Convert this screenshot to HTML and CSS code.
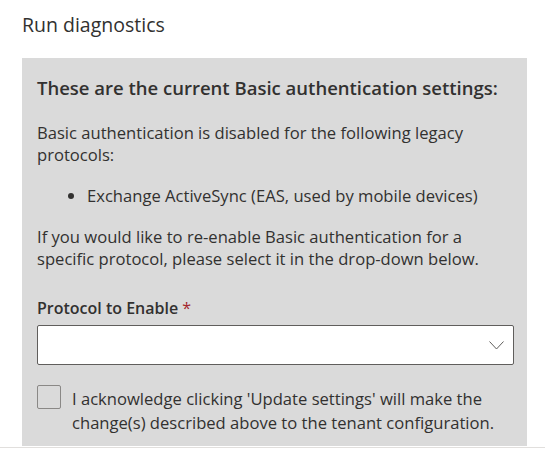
FILE: index.html
```html
<!DOCTYPE html>
<html>
<head>
<meta charset="utf-8">
<link rel="stylesheet" href="styles.css">
</head>
<body>
<div class="page">
  <h1 class="title">Run diagnostics</h1>
  <div class="panel">
    <h2 class="heading">These are the current Basic authentication settings:</h2>
    <p class="text">Basic authentication is disabled for the following legacy protocols:</p>
    <ul class="list">
      <li>Exchange ActiveSync (EAS, used by mobile devices)</li>
    </ul>
    <p class="text text-2">If you would like to re-enable Basic authentication for a specific protocol, please select it in the drop-down below.</p>
    <label class="label">Protocol to Enable <span class="req">*</span></label>
    <div class="select">
      <svg class="chev" width="15" height="9" viewBox="0 0 15 9"><path d="M0.5 0.5 L7.5 8 L14.5 0.5" fill="none" stroke="#605e5c" stroke-width="1"/></svg>
    </div>
    <div class="check-row">
      <span class="box"></span>
      <span class="check-text">I acknowledge clicking 'Update settings' will make the change(s) described above to the tenant configuration.</span>
    </div>
  </div>
  <div class="rule"></div>
</div>
</body>
</html>
```
FILE: styles.css
```css
html, body {
  margin: 0;
  padding: 0;
  background: #ffffff;
}
body {
  font-family: "Open Sans", "Noto Sans", sans-serif;
  color: #323130;
  overflow: hidden;
}
.page {
  width: 545px;
  height: 454px;
  overflow: hidden;
}
.title {
  margin: 0;
  padding: 11px 0 0 22px;
  height: 58px;
  box-sizing: border-box;
  font-size: 19.5px;
  font-weight: 400;
  line-height: 28px;
}
.panel {
  margin-left: 22px;
  width: 505px;
  height: 388px;
  box-sizing: border-box;
  background: #dadada;
  padding: 16px 13px 0 15px;
}
.heading {
  margin: 0;
  font-size: 18.5px;
  font-weight: 600;
  line-height: 28px;
}
.text {
  margin: 20px 0 0 0;
  font-size: 16.6px;
  line-height: 22px;
}
.text-2 {
  margin-top: 19px;
}
.list {
  margin: 19px 0 0 0;
  padding-left: 50px;
  font-size: 16.6px;
  line-height: 22px;
}
.label {
  display: block;
  margin-top: 27px;
  font-size: 16px;
  font-weight: 600;
  line-height: 22px;
}
.req {
  color: #a4262c;
  font-weight: 400;
}
.select {
  margin-top: 6px;
  height: 40px;
  box-sizing: border-box;
  background: #ffffff;
  border: 1px solid #605e5c;
  border-radius: 2px;
  display: flex;
  align-items: center;
  justify-content: flex-end;
  padding-right: 9px;
}
.chev {
  display: block;
}
.check-row {
  margin-top: 20px;
  display: flex;
  gap: 11px;
  align-items: flex-start;
}
.box {
  flex: 0 0 auto;
  width: 24px;
  height: 24px;
  box-sizing: border-box;
  border: 1px solid #8a8886;
  border-radius: 2px;
}
.check-text {
  font-size: 16.6px;
  line-height: 24px;
  padding-top: 2px;
}
.rule {
  height: 1px;
  background: #e1dfdd;
  margin-top: 1px;
}
```
